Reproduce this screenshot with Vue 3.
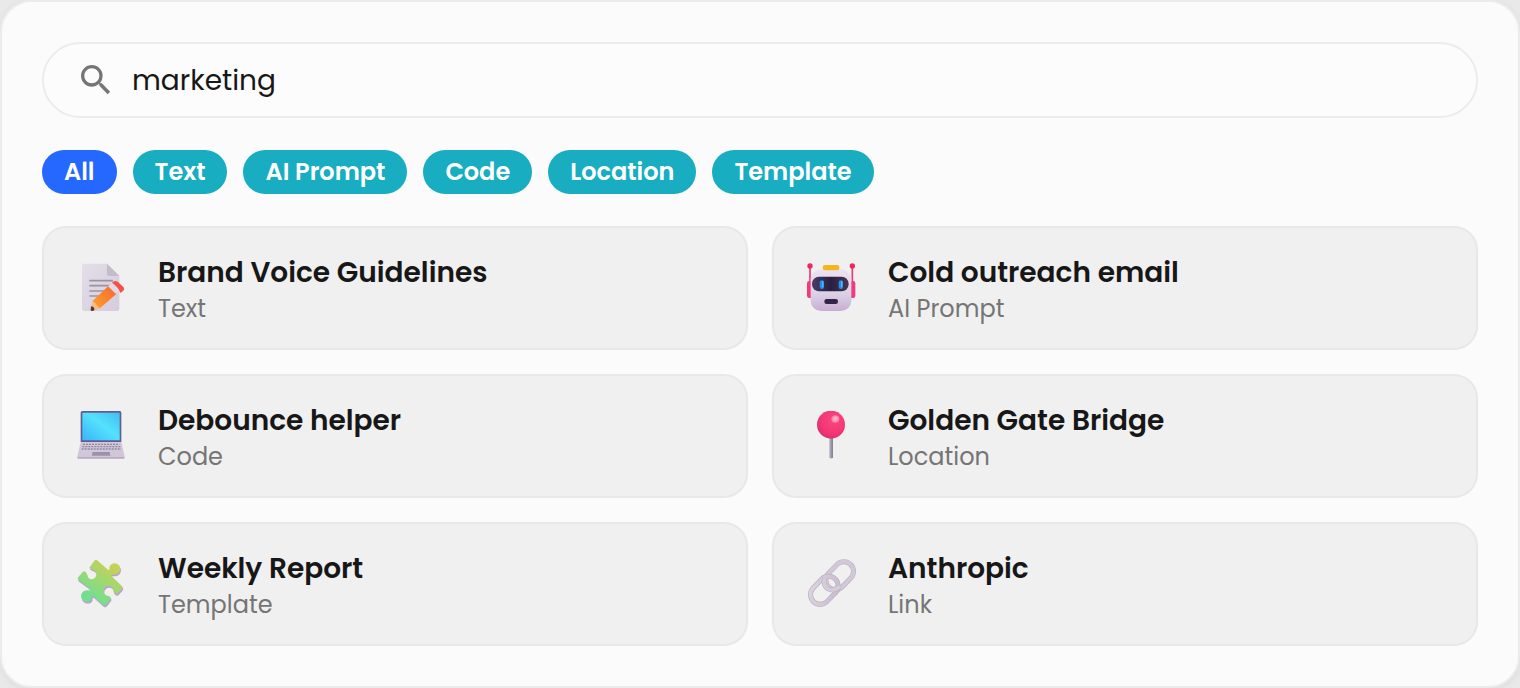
<script setup>
import { ref } from 'vue'

const query = ref('marketing')
const active = ref('All')
const filters = ['All', 'Text', 'AI Prompt', 'Code', 'Location', 'Template']
const items = [
  { icon: 'memo', title: 'Brand Voice Guidelines', type: 'Text' },
  { icon: 'robot', title: 'Cold outreach email', type: 'AI Prompt' },
  { icon: 'laptop', title: 'Debounce helper', type: 'Code' },
  { icon: 'pin', title: 'Golden Gate Bridge', type: 'Location' },
  { icon: 'puzzle', title: 'Weekly Report', type: 'Template' },
  { icon: 'link', title: 'Anthropic', type: 'Link' },
]
</script>

<template>
  <main class="panel">
    <label class="search">
      <svg class="search-icon" viewBox="0 0 24 24" aria-hidden="true">
        <path fill="#757575" d="M15.5 14h-.79l-.28-.27A6.47 6.47 0 0 0 16 9.5 6.5 6.5 0 1 0 9.5 16c1.61 0 3.09-.59 4.23-1.57l.27.28v.79l5 4.99L20.49 19zm-6 0C7.01 14 5 11.99 5 9.5S7.01 5 9.5 5 14 7.01 14 9.5 11.99 14 9.5 14" />
      </svg>
      <input v-model="query" class="search-input" type="text" aria-label="Search" />
    </label>

    <nav class="filters" aria-label="Filter by type">
      <button
        v-for="f in filters"
        :key="f"
        type="button"
        class="chip"
        :class="{ active: f === active }"
        :aria-pressed="f === active"
        @click="active = f"
      >{{ f }}</button>
    </nav>

    <section class="grid">
      <article v-for="item in items" :key="item.title" class="card">
        <svg class="card-icon" viewBox="48 39 150 150" aria-hidden="true">
          <template v-if="item.icon === 'memo'">
            <defs>
              <linearGradient id="paper" x1="0" y1="0" x2="1" y2="1">
                <stop offset="0" stop-color="#e3dfe9" />
                <stop offset="1" stop-color="#d5cbdd" />
              </linearGradient>
              <linearGradient id="pencil" x1="0" y1="1" x2="1" y2="0">
                <stop offset="0" stop-color="#ffa12e" />
                <stop offset="1" stop-color="#f4682f" />
              </linearGradient>
            </defs>
            <path fill="url(#paper)" d="M72 41h69l37 37v98q0 7-7 7H72q-6 0-6-7V47q0-6 6-6z" />
            <path fill="#c3bcc9" d="M141 41l37 37h-31q-6 0-6-6z" />
            <path stroke="#9a929f" stroke-width="5" stroke-linecap="round" d="M90 92h67M90 107h67M90 123h56M90 138h38" />
            <path fill="#f5bd86" d="M98 152l22 22-21 9q-7 1-6-6z" />
            <path fill="#503640" d="M94 168q10 3 9 13l-6 2q-6 1-5-6z" />
            <path fill="url(#pencil)" d="M97 154l49-47 24 24-52 45q-1-8-8-9-1-8-13-13z" />
            <path fill="#e4d9e8" d="M144 109l13-12 24 23-13 12z" />
            <path fill="#f5514a" d="M156 98l6-4q6-3 12 2l17 16q4 5-1 10l-9 7q-4-16-25-31z" />
          </template>

          <template v-else-if="item.icon === 'robot'">
            <defs>
              <linearGradient id="head" x1="0" y1="0" x2="0" y2="1">
                <stop offset="0" stop-color="#ece2f1" />
                <stop offset=".6" stop-color="#dbd0e5" />
                <stop offset="1" stop-color="#c8aed4" />
              </linearGradient>
              <linearGradient id="visor" x1="0" y1="0" x2="1" y2="0">
                <stop offset="0" stop-color="#493d63" />
                <stop offset=".5" stop-color="#281f42" />
                <stop offset="1" stop-color="#493551" />
              </linearGradient>
            </defs>
            <path stroke="#e93b70" stroke-width="5" d="M60 48v52M187 48v52" />
            <circle cx="60" cy="48" r="8" fill="#e82b5d" />
            <circle cx="187" cy="48" r="8" fill="#e82b5d" />
            <rect x="51" y="93" width="18" height="51" rx="7" fill="#f33978" />
            <rect x="178" y="93" width="18" height="51" rx="7" fill="#eb3e82" />
            <rect x="62" y="58" width="122" height="125" rx="31" fill="url(#head)" />
            <rect x="98" y="45" width="50" height="16" rx="7" fill="#f5b51d" />
            <rect x="66" y="80" width="110" height="44" rx="21" fill="url(#visor)" />
            <rect x="89" y="91" width="13" height="26" rx="6" fill="#218ee5" />
            <rect x="146" y="91" width="13" height="26" rx="6" fill="#218ee5" />
            <path stroke="#51b9ff" stroke-width="4" stroke-linecap="round" d="M98 95v15M155 95v15" />
            <rect x="103" y="147" width="41" height="15" rx="7" fill="#33254a" />
          </template>

          <template v-else-if="item.icon === 'laptop'">
            <defs>
              <linearGradient id="screen" x1="1" y1="0" x2="0" y2="1">
                <stop offset="0" stop-color="#42bdf3" />
                <stop offset=".45" stop-color="#55e1fd" />
                <stop offset="1" stop-color="#38b4fb" />
              </linearGradient>
            </defs>
            <path fill="#625d91" d="M67 39h112q5 0 5 5v88H62V44q0-5 5-5z" />
            <path fill="url(#screen)" d="M67 44h112v83H67z" />
            <path fill="#d2c7da" d="M62 132h122l10 44H52z" />
            <path fill="#b8abc0" d="M52 176h142v3q0 3-4 3H56q-4 0-4-3z" />
            <path stroke="#91889a" stroke-width="4" stroke-dasharray="6 3" d="M69 139h109M67 146h114M65 153h118" />
            <path fill="#9d93a8" d="M98 162h51l2 11H95z" />
          </template>

          <template v-else-if="item.icon === 'pin'">
            <defs>
              <linearGradient id="needle" x1="0" y1="0" x2="1" y2="0">
                <stop offset="0" stop-color="#b8b3c5" />
                <stop offset="1" stop-color="#827c91" />
              </linearGradient>
              <radialGradient id="ball" cx=".6" cy=".35" r=".7">
                <stop offset="0" stop-color="#fa4682" />
                <stop offset=".65" stop-color="#f53675" />
                <stop offset="1" stop-color="#d5306e" />
              </radialGradient>
              <radialGradient id="shine">
                <stop offset="0" stop-color="#ffc6d4" />
                <stop offset="1" stop-color="#ff7ba3" />
              </radialGradient>
            </defs>
            <path fill="url(#needle)" d="M118 118h11v60q-5 7-11 0z" />
            <circle cx="123" cy="80" r="42" fill="url(#ball)" />
            <ellipse cx="136" cy="63" rx="12" ry="11" fill="url(#shine)" />
          </template>

          <template v-else-if="item.icon === 'puzzle'">
            <defs>
              <linearGradient id="piece" gradientUnits="userSpaceOnUse" x1="152" y1="60" x2="86" y2="155">
                <stop offset="0" stop-color="#c5d158" />
                <stop offset=".5" stop-color="#9ad974" />
                <stop offset="1" stop-color="#70df91" />
              </linearGradient>
              <path id="piece-shape" d="M90 62L103 44q4-5 10 0l33 29c5-3 0-8 4-14 7-11 22-9 28 0 7 12 0 26-14 27-7 0-10-1-11 3l32 30q5 5 1 10l-12 13q-5 4-10 0c-5-4-3-9-6-15-7-12-27-8-27 8 0 14 11 12 20 18q3 4 0 8l-12 15q-5 5-10 1l-30-27c-5 1-1 7-5 12-7 9-22 7-28-2-7-13 1-27 15-27 8 0 10 1 11-4L55 102q-4-5 0-9l13-15q4-4 9 0c5 5 3 11 8 17 13 12 30-3 22-17-4-7-11-6-16-10-3-2-3-4-1-6z" />
            </defs>
            <use href="#piece-shape" x="2" y="5" fill="#bc9ed2" />
            <use href="#piece-shape" fill="url(#piece)" />
          </template>

          <template v-else>
            <defs>
              <linearGradient id="metal" x1="0" y1="0" x2="1" y2="1">
                <stop offset="0" stop-color="#ddd5e1" />
                <stop offset="1" stop-color="#c6bbd0" />
              </linearGradient>
            </defs>
            <g fill="none">
              <rect x="102" y="60" width="94" height="58" rx="29" transform="rotate(-46 149 89)" stroke="#bbb1c3" stroke-width="15" />
              <rect x="102" y="60" width="94" height="58" rx="29" transform="rotate(-46 149 89)" stroke="#d2c9d8" stroke-width="11" />
              <rect x="56" y="104" width="94" height="58" rx="29" transform="rotate(-46 103 133)" stroke="#b7adc0" stroke-width="15" />
              <rect x="56" y="104" width="94" height="58" rx="29" transform="rotate(-46 103 133)" stroke="url(#metal)" stroke-width="11" />
              <path d="M105 95c-7 17 0 32 17 36 12 2 21-3 28-11" stroke="#bbb1c3" stroke-width="15" />
              <path d="M105 95c-7 17 0 32 17 36 12 2 21-3 28-11" stroke="#d5ccda" stroke-width="11" />
            </g>
          </template>
        </svg>
        <div class="card-text">
          <h2 class="card-title">{{ item.title }}</h2>
          <p class="card-type">{{ item.type }}</p>
        </div>
      </article>
    </section>
  </main>
</template>

<style>
html,
body {
  background: #e9e9e9;
}
</style>

<style scoped>
.panel {
  box-sizing: border-box;
  display: flex;
  flex-direction: column;
  gap: 32px;
  padding: 40px;
  border: 2px solid #ececec;
  border-radius: 32px;
  background: #fbfbfb;
  box-shadow: 0 2px 8px rgba(0, 0, 0, 0.06);
  color: #171717;
  font-family: Poppins, Inter, "Open Sans", sans-serif;
}

.search {
  display: flex;
  align-items: center;
  gap: 16px;
  padding: 16px 32px;
  border: 2px solid #ececec;
  border-radius: 38px;
  background: #fcfcfc;
}

.search-icon {
  flex: none;
  width: 40px;
  height: 40px;
}

.search-input {
  box-sizing: border-box;
  flex: 1;
  min-width: 0;
  height: 40px;
  padding: 2px 0 0;
  border: 0;
  outline: 0;
  background: transparent;
  color: inherit;
  font: inherit;
  font-size: 28px;
}

.filters {
  display: flex;
  flex-wrap: wrap;
  gap: 16px;
}

.chip {
  padding: 4px 22px;
  border: 0;
  border-radius: 22px;
  background: #18adc1;
  color: #fff;
  font: inherit;
  font-size: 24px;
  font-weight: 600;
  line-height: 36px;
  cursor: pointer;
}

.chip.active {
  background: #2468ff;
}

.grid {
  display: grid;
  grid-template-columns: repeat(2, minmax(0, 1fr));
  gap: 24px;
}

.card {
  display: flex;
  align-items: center;
  gap: 32px;
  padding: 24px 32px;
  border: 2px solid #e8e8e8;
  border-radius: 24px;
  background: #f0f0f0;
}

.card-icon {
  flex: none;
  width: 50px;
  height: 50px;
}

.card-text {
  min-width: 0;
}

.card-title {
  margin: 0;
  font-size: 28px;
  font-weight: 600;
  line-height: 42px;
}

.card-type {
  margin: 0;
  color: #757575;
  font-size: 24px;
  line-height: 30px;
}
</style>
